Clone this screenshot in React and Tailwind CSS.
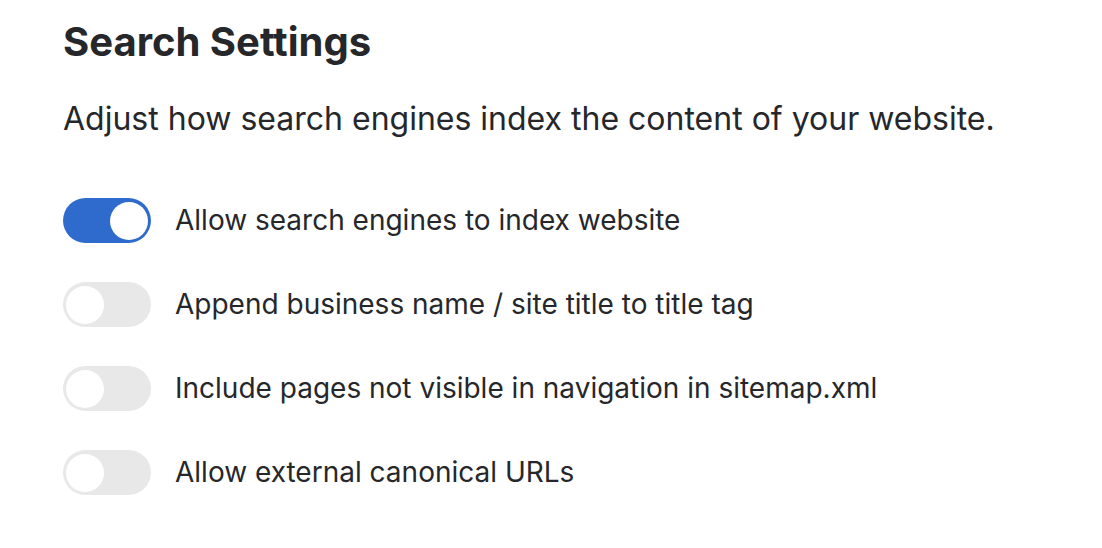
import React, { useState } from "react";

const items = [
  { label: "Allow search engines to index website", on: true },
  { label: "Append business name / site title to title tag", on: false },
  { label: "Include pages not visible in navigation in sitemap.xml", on: false },
  { label: "Allow external canonical URLs", on: false },
];

function Toggle({ on, onClick }) {
  return (
    <button
      onClick={onClick}
      className={`flex h-[45px] w-[88px] shrink-0 items-center rounded-full p-[3px] ${on ? "bg-[#2f6bcd] justify-end" : "bg-[#e8e8e8] justify-start"}`}
    >
      <span className="block h-[38px] w-[38px] rounded-full bg-white" />
    </button>
  );
}

export default function App() {
  const [state, setState] = useState(items.map((i) => i.on));
  return (
    <div className="min-h-[548px] bg-white px-[63px] pt-[18px] text-[#26272b]" style={{ fontFamily: "Inter, 'Noto Sans', sans-serif" }}>
      <h1 className="text-[40px] font-bold leading-[48px]">Search Settings</h1>
      <p className="mt-[33px] text-[32px] leading-[40px]">Adjust how search engines index the content of your website.</p>
      <div className="mt-[59px] flex flex-col gap-[39px]">
        {items.map((it, i) => (
          <div key={i} className="flex items-center gap-[24px]">
            <Toggle on={state[i]} onClick={() => setState(state.map((s, j) => (j === i ? !s : s)))} />
            <span className="text-[28px] leading-[45px]">{it.label}</span>
          </div>
        ))}
      </div>
    </div>
  );
}
